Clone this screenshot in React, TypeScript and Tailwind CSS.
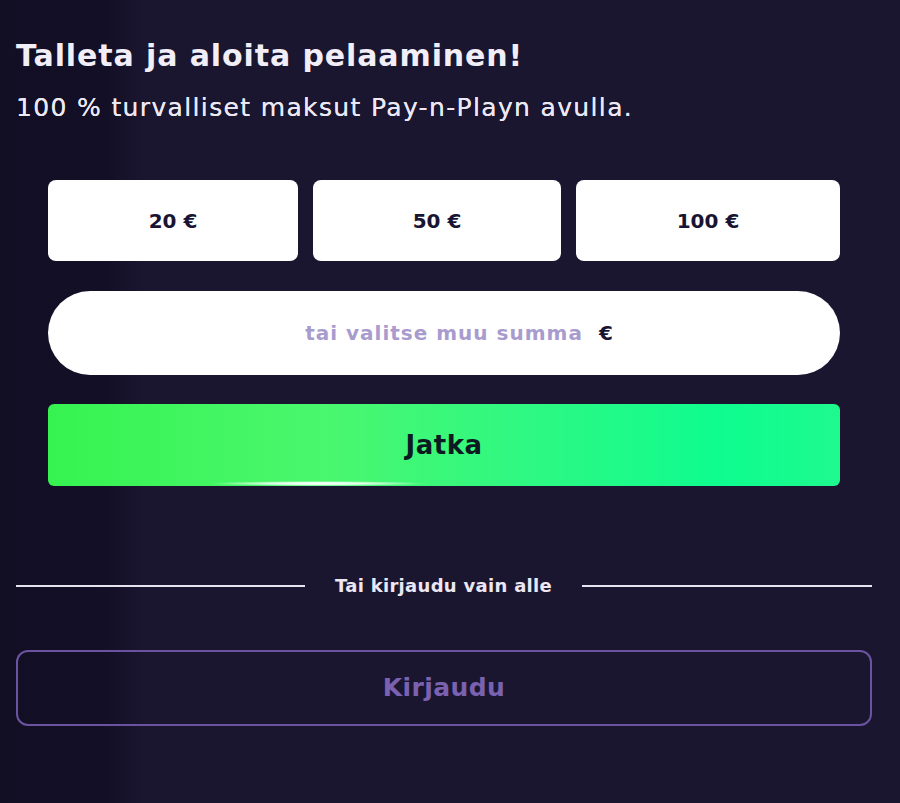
const font = "font-['DejaVu_Sans',sans-serif]";

export default function App() {
  const amounts = [
    { label: "20 €", cls: "w-[250px]" },
    { label: "50 €", cls: "w-[248px]" },
    { label: "100 €", cls: "flex-1" },
  ];

  return (
    <div className={`${font} w-[900px] h-[803px] bg-[linear-gradient(90deg,#120e24_0%,#130f26_12%,#1b1630_16%,#1b1630_100%)] text-white overflow-hidden`}>
      <div className="pl-4 pr-[28px] pt-[38px]">
        <h1 className="text-[30px] font-bold leading-[36px] text-[#f1eef8] tracking-[0.9px]">
          Talleta ja aloita pelaaminen!
        </h1>
        <p className="mt-[20px] text-[25px] leading-[28px] text-[#ece8f4] tracking-[1.35px] [text-shadow:0_0_0.4px_#ece8f4]">
          100 % turvalliset maksut Pay-n-Playn avulla.
        </p>

        <div className="px-8 mt-[58px] flex flex-col">
          <div className="flex gap-[15px]">
            {amounts.map((a) => (
              <button
                key={a.label}
                className={`${a.cls} h-[81px] rounded-[8px] bg-white text-[#1a1433] text-[20px] font-bold flex items-center justify-center`}
              >
                {a.label}
              </button>
            ))}
          </div>

          <div className="mt-[30px] h-[84px] rounded-full bg-white flex items-center justify-center gap-4 pl-[30px]">
            <span className="text-[20px] font-bold text-[#a89bce] tracking-[1px]">tai valitse muu summa</span>
            <span className="text-[20px] font-bold text-[#1a1433]">€</span>
          </div>

          <button className="relative mt-[29px] h-[82px] rounded-[6px] bg-[linear-gradient(90deg,#36f350_0%,#4af76e_35%,#2ff882_60%,#0efc8f_85%,#1ef98e_100%)] flex items-center justify-center overflow-hidden">
            <span className="text-[26px] font-bold text-[#0d1a22] tracking-[0.5px]">Jatka</span>
            <span className="absolute bottom-0 left-[160px] w-[220px] h-[5px] rounded-full bg-[radial-gradient(ellipse_at_center,#ffffff_0%,#e0ffe8_30%,rgba(255,255,255,0)_70%)]" />
          </button>
        </div>

        <div className="mt-[86px] flex items-center">
          <div className="w-[289px] h-[2px] bg-[#e6e2ee]" />
          <span className="flex-1 text-center text-[18px] font-bold text-[#ebe7f3] tracking-[0.3px]">
            Tai kirjaudu vain alle
          </span>
          <div className="w-[290px] h-[2px] bg-[#e6e2ee]" />
        </div>

        <button className="mt-[51px] w-full h-[76px] rounded-[12px] border-2 border-[#6a54a0] flex items-center justify-center text-[25px] font-bold text-[#7a62b0] tracking-[0.4px]">
          Kirjaudu
        </button>
      </div>
    </div>
  );
}
